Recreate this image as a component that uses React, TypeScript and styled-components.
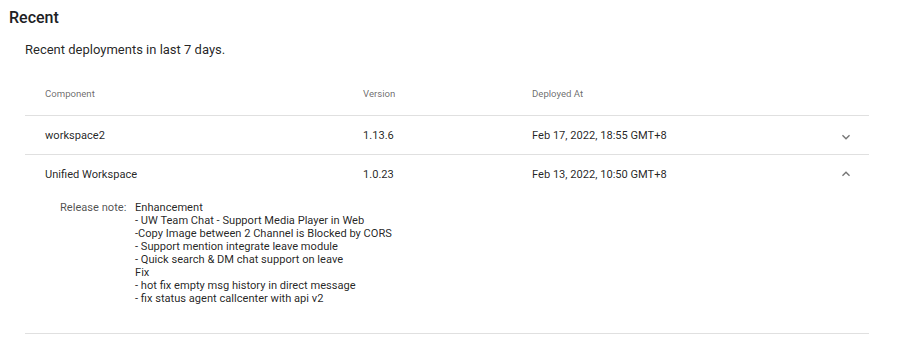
import React, { useState } from "react";
import styled, { createGlobalStyle } from "styled-components";

const GlobalStyle = createGlobalStyle`
  body {
    margin: 0;
    background: #fff;
    font-family: Roboto, "Liberation Sans", Arial, sans-serif;
    color: rgba(0, 0, 0, 0.87);
  }
`;

const Page = styled.div`
  width: 898px;
  height: 354px;
  overflow: hidden;
`;

const Title = styled.h2`
  margin: 8px 0 0 9px;
  font-size: 16px;
  line-height: 20px;
  font-weight: 500;
  color: #202124;
`;

const Subtitle = styled.p`
  margin: 14px 0 0 25px;
  font-size: 13px;
  line-height: 16px;
`;

const Table = styled.div`
  margin: 0 29px 0 25px;
`;

const Row = styled.div<{ $head?: boolean }>`
  display: grid;
  grid-template-columns: 318px 169px 1fr 16px;
  align-items: center;
  padding: ${(p) => (p.$head ? "30px 15px 15px 20px" : "12px 15px 10px 20px")};
  font-size: ${(p) => (p.$head ? "9.6px" : "11.1px")};
  line-height: ${(p) => (p.$head ? "12px" : "16px")};
  color: ${(p) => (p.$head ? "rgba(0, 0, 0, 0.6)" : "rgba(0, 0, 0, 0.87)")};
`;

const Item = styled.div`
  border-bottom: 1px solid #e0e0e0;
`;

const Toggle = styled.button<{ $up?: boolean }>`
  all: unset;
  display: flex;
  width: 16px;
  height: 16px;
  color: #757575;
  cursor: pointer;
  transform: translateY(${(p) => (p.$up ? "-1px" : "1px")});
`;

const Note = styled.div`
  display: grid;
  grid-template-columns: 75px 1fr;
  align-items: baseline;
  padding: 8px 0 28px 35px;
  font-size: 11.1px;
  line-height: 13px;
`;

const NoteLabel = styled.div`
  color: rgba(0, 0, 0, 0.7);
`;

const NoteBody = styled.div`
  white-space: pre-line;
  color: rgba(0, 0, 0, 0.87);
`;

const Chevron = ({ up }: { up?: boolean }) => (
  <svg width="16" height="16" viewBox="0 0 24 24" fill="currentColor">
    {up ? (
      <path d="M7.41 15.41 12 10.83l4.59 4.58L18 14l-6-6-6 6z" />
    ) : (
      <path d="M16.59 8.59 12 13.17 7.41 8.59 6 10l6 6 6-6z" />
    )}
  </svg>
);

const deployments = [
  {
    name: "workspace2",
    version: "1.13.6",
    at: "Feb 17, 2022, 18:55 GMT+8",
    note: "",
  },
  {
    name: "Unified Workspace",
    version: "1.0.23",
    at: "Feb 13, 2022, 10:50 GMT+8",
    note: [
      "Enhancement",
      "- UW Team Chat - Support Media Player in Web",
      "-Copy Image between 2 Channel is Blocked by CORS",
      "- Support mention integrate leave module",
      "- Quick search & DM chat support on leave",
      "Fix",
      "- hot fix empty msg history in direct message",
      "- fix status agent callcenter with api v2",
    ].join("\n"),
  },
];

export default function App() {
  const [open, setOpen] = useState<string>("Unified Workspace");

  return (
    <Page>
      <GlobalStyle />
      <Title>Recent</Title>
      <Subtitle>Recent deployments in last 7 days.</Subtitle>
      <Table>
        <Item>
          <Row $head>
            <div>Component</div>
            <div>Version</div>
            <div>Deployed At</div>
            <div />
          </Row>
        </Item>
        {deployments.map((d) => (
          <Item key={d.name}>
            <Row>
              <div>{d.name}</div>
              <div>{d.version}</div>
              <div>{d.at}</div>
              <Toggle
                $up={open === d.name}
                onClick={() => setOpen(open === d.name ? "" : d.name)}
              >
                <Chevron up={open === d.name} />
              </Toggle>
            </Row>
            {open === d.name && (
              <Note>
                <NoteLabel>Release note:</NoteLabel>
                <NoteBody>{d.note}</NoteBody>
              </Note>
            )}
          </Item>
        ))}
      </Table>
    </Page>
  );
}
